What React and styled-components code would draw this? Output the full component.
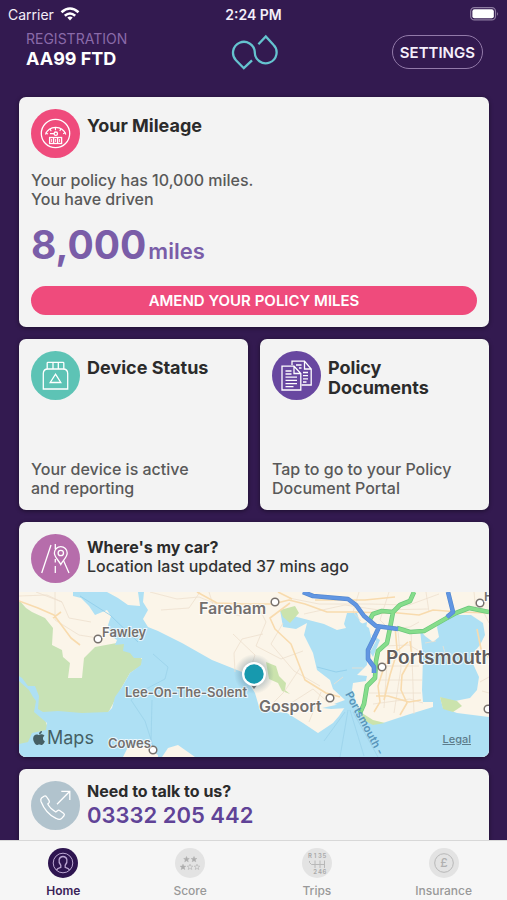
import React, { useState } from "react";
import styled, { createGlobalStyle } from "styled-components";
import { FaApple } from "react-icons/fa";

const GlobalStyle = createGlobalStyle`
  * {
    box-sizing: border-box;
  }

  body {
    margin: 0;
    background: #331a50;
    font-family: Inter, "Liberation Sans", sans-serif;
  }

  h1, h2, p {
    margin: 0;
  }

  button {
    font-family: inherit;
    cursor: pointer;
  }
`;

const Screen = styled.div`
  display: flex;
  flex-direction: column;
  height: 100vh;
  overflow: hidden;
  background: #331a50;
`;

const StatusBar = styled.div`
  display: grid;
  grid-template-columns: 1fr auto 1fr;
  align-items: center;
  flex-shrink: 0;
  height: 28px;
  padding: 0 8px;
  color: #f3eef8;
  font-size: 14px;
`;

const Carrier = styled.div`
  display: flex;
  align-items: center;
  gap: 6px;
`;

const Time = styled.div`
  font-weight: 600;
`;

const Battery = styled.svg`
  justify-self: end;
`;

const Header = styled.header`
  display: grid;
  grid-template-columns: 1fr auto 1fr;
  align-items: center;
  flex-shrink: 0;
  height: 48px;
  padding: 0 24px 0 26px;
`;

const Registration = styled.div`
  padding-bottom: 6px;
`;

const RegLabel = styled.p`
  color: #8a6aa9;
  font-size: 14px;
  line-height: 20px;
`;

const RegNumber = styled.h1`
  color: #fff;
  font-size: 18px;
  font-weight: 700;
  line-height: 20px;
`;

const SettingsButton = styled.button`
  justify-self: end;
  height: 34px;
  padding: 0 7px;
  border: 1px solid #927aa9;
  border-radius: 17px;
  background: transparent;
  color: #f6effb;
  font-size: 15px;
  font-weight: 600;
`;

const Content = styled.main`
  display: flex;
  flex: 1;
  flex-direction: column;
  gap: 12px;
  min-height: 0;
  padding: 21px 18px 0 19px;
  overflow: hidden;
`;

const Card = styled.section`
  flex-shrink: 0;
  padding: ${(props) => (props.$flush ? "0" : "12px")};
  border-radius: 7px;
  background: #f3f3f3;
  box-shadow: 0 1px 4px rgba(0, 0, 0, 0.45);
  overflow: hidden;
`;

const CardRow = styled.div`
  display: grid;
  flex-shrink: 0;
  grid-template-columns: 1fr 1fr;
  gap: 12px;

  ${Card} {
    display: flex;
    flex-direction: column;
    justify-content: space-between;
    min-height: 171px;
  }
`;

const ContactCard = styled(Card)`
  min-height: 120px;
`;

const CardHead = styled.div`
  display: flex;
  gap: 7px;
  padding: ${(props) => (props.$inset ? "12px 12px 9px" : "0")};
`;

const IconCircle = styled.svg`
  flex-shrink: 0;
  width: 49px;
  height: 49px;
  fill: none;
  stroke: #fff;
  stroke-width: 1.3;
`;

const Title = styled.h2`
  padding-top: 7px;
  color: #2b2b2b;
  font-size: 18px;
  font-weight: 700;
  line-height: 20px;
`;

const SmallTitle = styled(Title)`
  padding-top: ${(props) => (props.$top ? "0" : "3px")};
  font-size: 16px;
`;

const Subtitle = styled.p`
  color: #333;
  font-size: 16px;
  font-weight: 500;
  line-height: 18px;
`;

const Body = styled.p`
  color: #595959;
  font-size: 16px;
  font-weight: 500;
  line-height: 19px;
`;

const MileageBody = styled(Body)`
  margin-top: 13px;
`;

const Miles = styled.p`
  display: flex;
  align-items: baseline;
  gap: 2px;
  margin: 12px 0 11px;
  color: #7a5da8;
  font-size: 22px;
  font-weight: 600;
  line-height: 48px;

  strong {
    font-size: 39px;
    font-weight: 700;
  }
`;

const AmendButton = styled.button`
  display: block;
  width: 100%;
  height: 29px;
  border: 0;
  border-radius: 15px;
  background: #ef4b7c;
  color: #fff;
  font-size: 15px;
  font-weight: 600;
`;

const Phone = styled.a`
  display: block;
  color: #604397;
  font-size: 22px;
  font-weight: 600;
  line-height: 28px;
  text-decoration: none;
`;

const MapView = styled.div`
  position: relative;
  height: 165px;
`;

const MapDrawing = styled.svg`
  display: block;
  width: 100%;
  height: 100%;
`;

const MapLabel = styled.text`
  fill: ${(props) => props.$color || "#74706e"};
  stroke: ${(props) => (props.$plain ? "none" : "rgba(255, 255, 255, 0.75)")};
  stroke-width: 2px;
  paint-order: stroke;
  font-size: ${(props) => props.$size}px;
  font-weight: 600;
`;

const MapBrand = styled.div`
  position: absolute;
  bottom: 7px;
  left: 12px;
  display: flex;
  align-items: center;
  color: #455f64;
  font-size: 18px;
  line-height: 24px;
`;

const LegalLink = styled.a`
  position: absolute;
  right: 18px;
  bottom: 11px;
  color: #5d7c8b;
  font-size: 11px;
  font-weight: 500;
`;

const TabBar = styled.nav`
  display: grid;
  flex-shrink: 0;
  grid-template-columns: repeat(4, 1fr);
  height: 60px;
  border-top: 1px solid #d8d8d8;
  background: #f6f6f6;
`;

const Tab = styled.button`
  display: flex;
  flex-direction: column;
  align-items: center;
  gap: 5px;
  padding: 7px 0 0;
  border: 0;
  background: transparent;
  color: ${(props) => (props.$active ? "#3b2359" : "#999")};
  font-size: 12px;
  font-weight: ${(props) => (props.$active ? 600 : 500)};
  line-height: 16px;

  svg {
    width: 30px;
    height: 30px;
    fill: none;
    stroke: ${(props) => (props.$active ? "#bba6d2" : "#b8b8b8")};
  }

  .disc {
    fill: ${(props) => (props.$active ? "#2e1550" : "#e3e3e3")};
    stroke: none;
  }
`;

function WifiIcon() {
  return (
    <svg width="20" height="14" viewBox="0 0 20 14" fill="none" stroke="#fff" strokeWidth="2.6">
      <path d="M1.5 5.2Q10-2.2 18.5 5.2" />
      <path d="M4.8 8.8Q10 4.2 15.2 8.8" />
      <path d="M7.3 10.6Q10 8.3 12.7 10.6L10 13.6Z" fill="#fff" stroke="none" />
    </svg>
  );
}

function BatteryIcon() {
  return (
    <Battery width="29" height="14" viewBox="0 0 31 15">
      <rect x="0.7" y="0.7" width="26.6" height="13.2" rx="4" fill="none" stroke="#8e7ca1" strokeWidth="1.3" />
      <rect x="2.5" y="2.5" width="23" height="9.6" rx="2.3" fill="#fff" />
      <path d="M29 5Q31 7.3 29 9.6Z" fill="#9b8bac" />
    </Battery>
  );
}

function Logo() {
  return (
    <svg width="48" height="36" viewBox="0 0 48 36" fill="none" stroke="#65c3cf" strokeWidth="2.3">
      <path d="M21 26.3L12.8 34.2L5 26.2A10.9 10.9 0 1 1 23.8 18A10.9 10.9 0 1 0 42.4 10.7L34.8 2.4L27.4 10.3" />
    </svg>
  );
}

function MileageIcon() {
  return (
    <IconCircle viewBox="0 0 49 49">
      <circle cx="24.5" cy="24.5" r="24.5" fill="#ef4b7c" stroke="none" />
      <circle cx="24.5" cy="24.5" r="14.2" />
      <path d="M14.5 25.5A10.8 10.8 0 0 1 34.8 25.5" />
      <path d="M15.5 24.8A10.8 10.8 0 0 1 33.8 24.8" strokeWidth="2.8" strokeDasharray="1.2 3.8" />
      <path d="M19 24.7H23.3" />
      <circle cx="24.8" cy="24.7" r="1.7" />
      <rect x="18.6" y="28.5" width="12" height="6" />
      <path d="M22.6 28.5V34.5M26.6 28.5V34.5" />
      <path d="M20.6 30V33M24.6 30V33M28.6 30V33" strokeWidth="0.9" />
    </IconCircle>
  );
}

function DeviceIcon() {
  return (
    <IconCircle viewBox="0 0 49 49">
      <circle cx="24.5" cy="24.5" r="24.5" fill="#5dc3b5" stroke="none" />
      <path d="M16.2 18V12Q16.2 11.3 17 11.3H32Q32.8 11.3 32.8 12V18M22 11.3V18M27.3 11.3V18" />
      <path d="M12.3 38V22.5Q12.3 18 17 18H32Q36.7 18 36.7 22.5V38Z" />
      <path d="M24.5 23.2L29.8 31.5H19.2Z" />
    </IconCircle>
  );
}

function DocumentsIcon() {
  return (
    <IconCircle viewBox="0 0 49 49">
      <circle cx="24.5" cy="24.5" r="24.5" fill="#6847a0" stroke="none" />
      <path d="M20 14V10.2H32.5L39.2 18V34H29.5M32.5 10.2V18H39.2" />
      <path d="M10 15.2H22L28.8 22.5V39H10ZM22 15.2V22.5H28.8" />
      <path d="M13.5 20H19.5M13.5 23H19.5M13.5 26.2H25M13.5 29.4H25M13.5 32.6H25M13.5 35.6H21.5" />
      <path d="M24 14H29.5M27 17H29.5M31 21.5H36M31 24.7H36M31 27.9H36M31 31H34.5" />
    </IconCircle>
  );
}

function CarIcon() {
  return (
    <IconCircle viewBox="0 0 49 49">
      <circle cx="24.5" cy="24.5" r="24.5" fill="#b66dab" stroke="none" />
      <path d="M20 11L10.7 39M32.5 26.5L38 39M24.3 10V15M24.3 25V28.5M24.3 32V39" />
      <path d="M29.8 30.5C27.5 26.2 23.4 23.2 23.4 19A6.4 6.4 0 0 1 36.2 19C36.2 23.2 32 26.2 29.8 30.5Z" />
      <circle cx="29.8" cy="19" r="2.7" />
    </IconCircle>
  );
}

function CallIcon() {
  return (
    <IconCircle viewBox="0 0 49 49">
      <circle cx="24.5" cy="24.5" r="24.5" fill="#b1c3cd" stroke="none" />
      <path d="M10.5 17L13 15.2Q14.5 14.3 15.7 16L18 19.3Q19 21 17.6 22.2L16.8 23Q18.8 27.2 24.8 31L26.4 29.7Q27.6 28.7 29 29.7L32.5 32.3Q34 33.4 33 34.8L30.7 37.4Q28.8 39.5 25 37.3C18.5 34.3 12.7 27.2 10 20.4Q9.3 18.3 10.5 17Z" />
      <path d="M26 23.3L38.8 10.3M30.3 10.3H38.8V19" />
    </IconCircle>
  );
}

function HomeIcon() {
  return (
    <svg viewBox="0 0 30 30">
      <circle className="disc" cx="15" cy="15" r="15" />
      <circle cx="15" cy="15" r="9.8" />
      <path d="M8.5 22Q9.3 20 12.8 19.3V17.2C9.8 14 10.6 8.5 15 8.5C19.4 8.5 20.2 14 17.2 17.2V19.3Q20.7 20 21.5 22" strokeWidth="1.3" />
    </svg>
  );
}

const star = "M0-2.8L0.8-0.9L2.8-0.8L1.2 0.5L1.8 2.5L0 1.4L-1.8 2.5L-1.2 0.5L-2.8-0.8L-0.8-0.9Z";

function ScoreIcon() {
  return (
    <svg viewBox="0 0 30 30">
      <circle className="disc" cx="15" cy="15" r="15" />
      <g fill="#adadad" stroke="#adadad" strokeWidth="0.5">
        <path d={star} transform="translate(11.5 11.3)" />
        <path d={star} transform="translate(19 11.3)" />
        <path d={star} transform="translate(8 19)" />
      </g>
      <g strokeWidth="0.7">
        <path d={star} transform="translate(15 19)" />
        <path d={star} transform="translate(22 19)" />
      </g>
    </svg>
  );
}

function TripsIcon() {
  return (
    <svg viewBox="0 0 30 30">
      <circle className="disc" cx="15" cy="15" r="15" />
      <path d="M7.5 13V14.5L9.5 16.5H23M13 12.5V20M18 12.5V20M22.5 12.5V20" />
      <g fill="#a8a8a8" stroke="none" fontSize="6" fontWeight="600" textAnchor="middle">
        <text x="8" y="10">R</text>
        <text x="13" y="10">1</text>
        <text x="18" y="10">3</text>
        <text x="22.5" y="10">5</text>
        <text x="13" y="26">2</text>
        <text x="18" y="26">4</text>
        <text x="22.5" y="26">6</text>
      </g>
    </svg>
  );
}

function InsuranceIcon() {
  return (
    <svg viewBox="0 0 30 30">
      <circle className="disc" cx="15" cy="15" r="15" />
      <circle cx="15" cy="15" r="9.3" />
      <text x="15" y="19" fill="#b0b0b0" stroke="none" fontSize="12" textAnchor="middle">£</text>
    </svg>
  );
}

// towns drawn as a small ring on the map
const towns = [
  [79, 47],
  [256, 10],
  [311, 106],
  [363, 75],
  [134, 158],
  [461, 11],
  [469, 117],
];

const greenRoads =
  "M395 0L391 9L381 13L374 20L371 36L368 51L359 59L357 69L356 86L348 94L345 112L341 121M350 29L354 22L363 19L374 20M378 36L391 40L405 39L426 27L437 21L450 16L470 20";
const blueRoads =
  "M284 0L294 4L329 7L337 13L345 24L357 34L379 37M360 35L354 48L349 58L349 67L355 75L355 81M429 0L434 20L428 25";

function SolentMap() {
  return (
    <MapDrawing viewBox="0 0 470 165" preserveAspectRatio="xMidYMid slice" fill="none">
      <defs>
        <radialGradient id="pinHalo">
          <stop offset="0.5" stopColor="#42657c" stopOpacity="0.35" />
          <stop offset="1" stopColor="#42657c" stopOpacity="0" />
        </radialGradient>
      </defs>
      <rect width="470" height="165" fill="#fbf5e9" />
      <path d="M0 8L7 16L13 20L26 26L34 36L33 53L43 58L44 65L51 71L49 86H63L65 66L76 55L103 50L124 68L122 74L111 81L103 95L89 121H24L30 140L9 151L0 153Z" fill="#c8e2b5" />
      <path
        d="M54 0L54 4L62 6L70 14L76 23L88 18L92 24L89 33L91 43L98 48L96 53L105 52L104 59L111 61L115 66L123 66L122 73L111 81L103 95L96 105L93 116L89 120L63 121L39 119L24 120L19 117L20 104L16 94L9 94L3 86L0 84V89L10 98L14 105L17 109L15 120L28 131L27 138L13 141L9 150L0 152V165H470V125L438 121L424 116L421 105L431 110L451 106L458 98L460 85L451 65L461 53L466 43L464 31L452 23H428L422 28L418 35L420 45L414 50L406 44L401 38L404 65L403 98L404 110L414 110V115L388 123L364 131L351 131L339 116L333 98L334 91L347 89L348 84L338 83L348 73L348 65L353 49L350 36L341 30L338 21L328 21L325 32L327 36L318 38L305 32L278 25L264 19L261 18L264 35L277 37L288 31L285 43L294 61L298 78L311 88L314 97L326 108L315 112L326 115L320 124L314 131L299 141L284 131L268 121L241 118L236 101L223 80L193 68L163 51L139 39L129 35L124 27L129 18L124 10L125 0H119L121 14L109 13L99 6L88 0Z"
        fill="#aee0f4"
      />
      <path d="M104 165L109 155L123 153L139 163V165M143 165L149 156L159 153L176 165" fill="#fbf5e9" />
      <path d="M261 18L276 14L280 21L271 31L264 25ZM247 70L257 74L260 84L267 91L266 98L271 102L263 99L259 91L250 87ZM421 105L438 109L443 114L434 120L424 117ZM343 121L354 128L366 131L354 133L344 128Z" fill="#cbe3ad" />
      <path d="M352 42L361 48L354 65L351 60L357 49ZM337 42L347 38L348 30L342 32ZM314 88L322 87V90L313 91ZM303 116L326 111L329 116L312 117Z" fill="#aee0f4" />

      <g stroke="#eee0ce" strokeWidth="0.8">
        <path d="M0 4L28 3L43 10L50 26L72 30M36 0V28L60 43L79 46M17 0L43 10M131 0L158 7L180 5L205 15L225 19M142 18L170 16L181 0M190 0L195 16L221 24M216 80L215 61L223 47L244 42M214 42L236 63L231 78M241 18L247 30L237 54L262 67L284 59M264 31L252 52L275 79L301 94M245 120L265 100L281 76M269 113L294 97L310 111M270 6L300 12H350L390 13L420 2M285 22L326 13L360 18L409 17M340 0L334 20L342 29M370 0L361 28L370 37L391 35L400 30M362 54L390 53L402 60M356 74H400M359 88H403M350 101H402M354 112L391 107L404 111M369 57L365 116M379 38L382 76L375 121M392 38L395 122M406 51L417 49M424 54L429 72M455 0L457 20M407 0L410 20M302 100L290 130M315 92L324 85M333 76L344 76M467 0L463 17L470 31M461 90L470 85M463 99L470 101" />
      </g>
      <g stroke="#f8dbae" strokeWidth="1.6" strokeLinejoin="round">
        <path d="M0 9L19 16L35 23L52 46L61 53M34 26L42 20M178 0L198 11L227 12L254 12L270 8L286 12L308 20L334 20L369 21M271 11L251 26L256 37L272 52L286 88L307 101L321 105M273 7L259 0M369 20L400 23L414 18L440 20L470 21M376 34L378 57L366 73M379 57L371 83L365 108M365 75L359 94L361 110L355 120M391 49L393 65L383 83L382 98L388 111L381 123M357 104L369 104L390 110L402 108M371 65L389 50M296 8L346 8L376 5M458 37L462 57L470 66" />
      </g>
      <path d="M134 62L149 75L146 87L127 97L112 108L126 129L135 157M133 108L132 150M326 120L305 149M329 118L321 165M331 118L345 164M334 120L359 165" stroke="#9bd2ea" strokeWidth="0.8" />
      <path d="M61 4L91 23L119 50M298 75L317 80L328 78" stroke="#8dcce8" strokeWidth="0.8" />

      <g strokeLinejoin="round">
        <path d={greenRoads} stroke="#6bc67c" strokeWidth="4.6" />
        <path d={greenRoads} stroke="#86dd8b" strokeWidth="3.2" />
        <path d={blueRoads} stroke="#5589d1" strokeWidth="4.6" />
        <path d={blueRoads} stroke="#6196e2" strokeWidth="3.2" />
      </g>

      <g fill="#fff" stroke="#77716c" strokeWidth="1.5">
        {towns.map(([x, y]) => (
          <circle key={x} cx={x} cy={y} r="3.8" />
        ))}
      </g>

      <MapLabel x="180" y="22" $size={16}>Fareham</MapLabel>
      <MapLabel x="83" y="45" $size={13}>Fawley</MapLabel>
      <MapLabel x="106" y="105" $size={13}>Lee-On-The-Solent</MapLabel>
      <MapLabel x="240" y="120" $size={16}>Gosport</MapLabel>
      <MapLabel x="367" y="72" $size={19} $color="#625e5d">Portsmouth</MapLabel>
      <MapLabel x="89" y="156" $size={13}>Cowes</MapLabel>
      <MapLabel x="465" y="9" $size={13}>Havant</MapLabel>
      <MapLabel x="326" y="102" $size={11} $color="#5995ba" $plain transform="rotate(62 326 102)">Portsmouth -</MapLabel>

      <circle cx="235" cy="82" r="20" fill="url(#pinHalo)" />
      <path d="M231 92L235 97L239 92Z" fill="#6e7479" />
      <circle cx="235" cy="82" r="12" fill="#fff" />
      <circle cx="235" cy="82" r="9.7" fill="#1799ae" />
    </MapDrawing>
  );
}

const tabs = [
  { name: "Home", Icon: HomeIcon },
  { name: "Score", Icon: ScoreIcon },
  { name: "Trips", Icon: TripsIcon },
  { name: "Insurance", Icon: InsuranceIcon },
];

function App() {
  const [activeTab, setActiveTab] = useState("Home");

  return (
    <Screen>
      <GlobalStyle />
      <StatusBar>
        <Carrier>
          Carrier <WifiIcon />
        </Carrier>
        <Time>2:24 PM</Time>
        <BatteryIcon />
      </StatusBar>
      <Header>
        <Registration>
          <RegLabel>REGISTRATION</RegLabel>
          <RegNumber>AA99 FTD</RegNumber>
        </Registration>
        <Logo />
        <SettingsButton>SETTINGS</SettingsButton>
      </Header>
      <Content>
        <Card>
          <CardHead>
            <MileageIcon />
            <Title>Your Mileage</Title>
          </CardHead>
          <MileageBody>
            Your policy has 10,000 miles.
            <br />
            You have driven
          </MileageBody>
          <Miles>
            <strong>8,000</strong>
            <span>miles</span>
          </Miles>
          <AmendButton>AMEND YOUR POLICY MILES</AmendButton>
        </Card>
        <CardRow>
          <Card>
            <CardHead>
              <DeviceIcon />
              <Title>Device Status</Title>
            </CardHead>
            <Body>
              Your device is active
              <br />
              and reporting
            </Body>
          </Card>
          <Card>
            <CardHead>
              <DocumentsIcon />
              <Title>Policy Documents</Title>
            </CardHead>
            <Body>
              Tap to go to your Policy
              <br />
              Document Portal
            </Body>
          </Card>
        </CardRow>
        <Card $flush>
          <CardHead $inset>
            <CarIcon />
            <div>
              <SmallTitle>Where's my car?</SmallTitle>
              <Subtitle>Location last updated 37 mins ago</Subtitle>
            </div>
          </CardHead>
          <MapView>
            <SolentMap />
            <MapBrand>
              <FaApple size={16} />
              Maps
            </MapBrand>
            <LegalLink href="#legal">Legal</LegalLink>
          </MapView>
        </Card>
        <ContactCard>
          <CardHead>
            <CallIcon />
            <div>
              <SmallTitle $top>Need to talk to us?</SmallTitle>
              <Phone href="tel:03332205442">03332 205 442</Phone>
            </div>
          </CardHead>
        </ContactCard>
      </Content>
      <TabBar>
        {tabs.map(({ name, Icon }) => (
          <Tab key={name} $active={name === activeTab} onClick={() => setActiveTab(name)}>
            <Icon />
            {name}
          </Tab>
        ))}
      </TabBar>
    </Screen>
  );
}

export default App;
